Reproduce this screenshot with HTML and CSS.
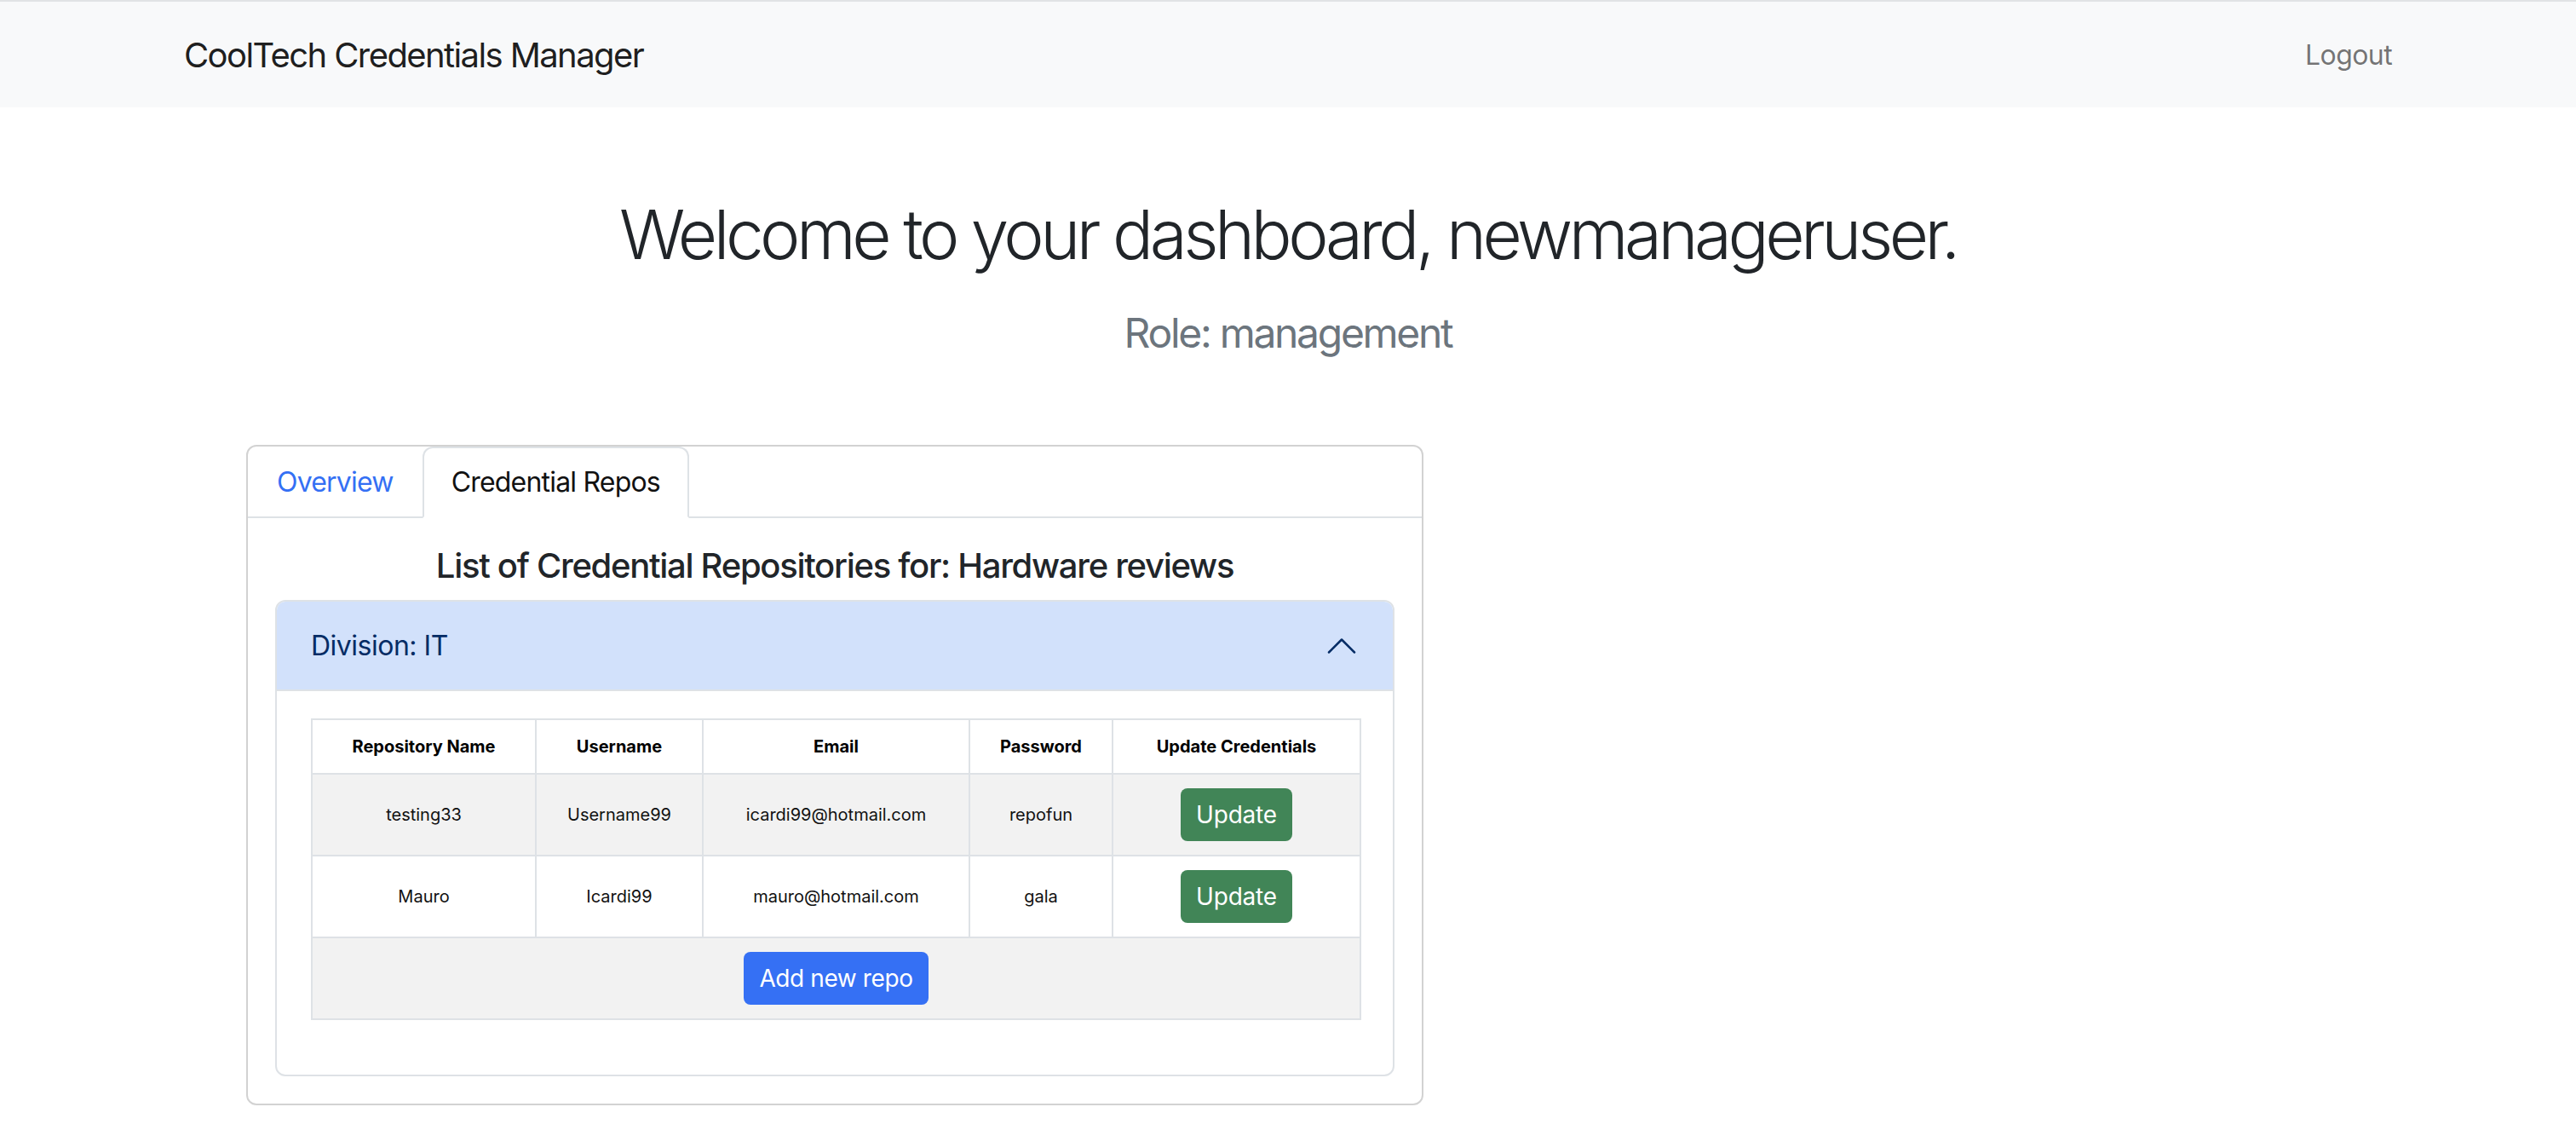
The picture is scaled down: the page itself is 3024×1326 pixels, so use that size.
FILE: index.html
```html
<!DOCTYPE html>
<html lang="en">
<head>
<meta charset="utf-8">
<title>CoolTech Credentials Manager</title>
<link rel="stylesheet" href="styles.css">
</head>
<body>
<nav class="navbar">
  <div class="nav-inner">
    <a class="brand" href="#">CoolTech Credentials Manager</a>
    <a class="logout" href="#">Logout</a>
  </div>
</nav>
<main class="page">
  <h1 class="welcome">Welcome to your dashboard, newmanageruser.</h1>
  <p class="role">Role: management</p>
  <section class="card">
    <ul class="tabs">
      <li class="tab">Overview</li>
      <li class="tab active">Credential Repos</li>
    </ul>
    <div class="card-body">
      <h5 class="list-title">List of Credential Repositories for: Hardware reviews</h5>
      <div class="accordion">
        <div class="acc-header">
          <span>Division: IT</span>
          <svg class="chevron" viewBox="0 0 16 16" width="40" height="40"><path d="M2 11L8 5L14 11" fill="none" stroke="#052c65" stroke-width="1" stroke-linecap="round" stroke-linejoin="round"/></svg>
        </div>
        <div class="acc-body">
          <table class="repo-table">
            <colgroup>
              <col class="c1"><col class="c2"><col class="c3"><col class="c4"><col class="c5">
            </colgroup>
            <thead>
              <tr><th>Repository Name</th><th>Username</th><th>Email</th><th>Password</th><th>Update Credentials</th></tr>
            </thead>
            <tbody>
              <tr class="striped"><td>testing33</td><td>Username99</td><td>icardi99@hotmail.com</td><td>repofun</td><td><button class="btn btn-update">Update</button></td></tr>
              <tr><td>Mauro</td><td>Icardi99</td><td>mauro@hotmail.com</td><td>gala</td><td><button class="btn btn-update">Update</button></td></tr>
              <tr class="striped"><td colspan="5"><button class="btn btn-add">Add new repo</button></td></tr>
            </tbody>
          </table>
        </div>
      </div>
    </div>
  </section>
</main>
</body>
</html>
```
FILE: styles.css
```css
* { box-sizing: border-box; }
body {
  margin: 0;
  font-family: Inter, "Liberation Sans", "Noto Sans", sans-serif;
  color: #212529;
  background: #fff;
}
.navbar {
  border-top: 2px solid #e1e3e5;
  background: #f8f9fa;
  height: 126px;
}
.nav-inner {
  width: 2592px;
  margin: 0 auto;
  height: 100%;
  display: flex;
  align-items: center;
  justify-content: space-between;
}
.brand {
  font-size: 40px;
  letter-spacing: -1.6px;
  color: rgba(0,0,0,0.9);
  text-decoration: none;
}
.logout {
  font-size: 32px;
  letter-spacing: -0.6px;
  color: rgba(0,0,0,0.55);
  text-decoration: none;
}
.page {
  width: 2592px;
  margin: 0 auto;
}
.welcome {
  margin: 101px 0 0;
  font-size: 80px;
  font-weight: 300;
  line-height: 96px;
  letter-spacing: -4.5px;
  text-align: center;
}
.role {
  margin: 39px 0 0;
  font-size: 48px;
  line-height: 58px;
  letter-spacing: -2.3px;
  text-align: center;
  color: #6c757d;
}
.card {
  margin: 102px 0 0 73px;
  width: 1382px;
  border: 2px solid rgba(0,0,0,0.175);
  border-radius: 12px;
}
.tabs {
  list-style: none;
  margin: 0;
  padding: 0;
  display: flex;
  border-bottom: 2px solid #dee2e6;
}
.tab {
  padding: 16px 32px;
  font-size: 32px;
  line-height: 48px;
  letter-spacing: -0.8px;
  border: 2px solid transparent;
  border-radius: 12px 12px 0 0;
  margin-bottom: -2px;
  color: #3470f4;
}
.tab.active {
  color: #111;
  background: #fff;
  border-color: #dee2e6 #dee2e6 #fff;
}
.card-body {
  padding: 32px;
}
.list-title {
  margin: 0 0 16px;
  font-size: 40px;
  font-weight: 500;
  line-height: 48px;
  letter-spacing: -1.3px;
  text-align: center;
}
.accordion {
  border: 2px solid #dee2e6;
  border-radius: 12px;
  overflow: hidden;
}
.acc-header {
  height: 103px;
  padding: 0 40px;
  display: flex;
  align-items: center;
  justify-content: space-between;
  background: #d2e1fb;
  color: #052c65;
  font-size: 32px;
  letter-spacing: -0.5px;
}
.chevron { display: block; }
.acc-body {
  border-top: 2px solid #dee2e6;
  padding: 32px 40px;
}
.repo-table {
  width: 100%;
  table-layout: fixed;
  border-collapse: collapse;
  border: 2px solid #dee2e6;
  margin-bottom: 32px;
  font-size: 20px;
}
.c1 { width: 263px; }
.c2 { width: 196px; }
.c3 { width: 313px; }
.c4 { width: 168px; }
.c5 { width: 291px; }
.repo-table th,
.repo-table td {
  border: 2px solid #dee2e6;
  padding: 16px;
  text-align: center;
  vertical-align: middle;
  line-height: 30px;
  color: #111;
}
.repo-table th { font-weight: 700; color: #000; }
.repo-table tr.striped td { background: #f2f2f2; }
.btn {
  font-family: inherit;
  font-size: 28px;
  line-height: 42px;
  padding: 8px 16px;
  border: 2px solid transparent;
  border-radius: 8px;
  color: #fff;
  cursor: pointer;
  display: inline-block;
  vertical-align: middle;
  letter-spacing: -0.2px;
}
.btn-update { background: #418557; }
.btn-add { background: #3570f4; letter-spacing: -0.4px; }
```
